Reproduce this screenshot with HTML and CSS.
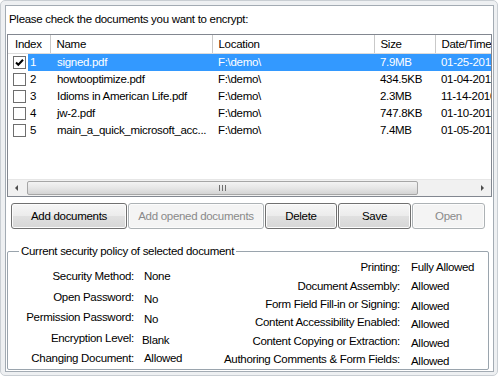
FILE: index.html
```html
<!DOCTYPE html>
<html lang="en">
<head>
  <meta charset="UTF-8" />
  <title>Encrypt documents</title>
  <link rel="stylesheet" href="styles.css">
</head>
<body>
  <div class="window">
    <div class="panel">
      <p class="prompt">Please check the documents you want to encrypt:</p>

      <div class="list">
        <div class="list-view">
          <table class="grid">
            <colgroup>
              <col class="w-index"><col class="w-name"><col class="w-loc"><col class="w-size"><col class="w-date">
            </colgroup>
            <thead>
              <tr>
                <th>Index</th><th>Name</th><th>Location</th><th>Size</th><th>Date/Time</th>
              </tr>
            </thead>
            <tbody>
              <tr class="selected">
                <td class="idx"><div class="idx-in"><span class="check checked"><svg viewBox="0 0 11 11" width="11" height="11"><path d="M2 5.5 L4.3 7.8 L9 2.8" fill="none" stroke="#000" stroke-width="2"/></svg></span><span class="num">1</span></div></td>
                <td>signed.pdf</td><td>F:\demo\</td><td>7.9MB</td><td>01-25-2011</td>
              </tr>
              <tr>
                <td class="idx"><div class="idx-in"><span class="check"></span><span class="num">2</span></div></td>
                <td>howtooptimize.pdf</td><td>F:\demo\</td><td>434.5KB</td><td>01-04-2011</td>
              </tr>
              <tr>
                <td class="idx"><div class="idx-in"><span class="check"></span><span class="num">3</span></div></td>
                <td>Idioms in American Life.pdf</td><td>F:\demo\</td><td>2.3MB</td><td>11-14-2010</td>
              </tr>
              <tr>
                <td class="idx"><div class="idx-in"><span class="check"></span><span class="num">4</span></div></td>
                <td>jw-2.pdf</td><td>F:\demo\</td><td>747.8KB</td><td>01-10-2011</td>
              </tr>
              <tr>
                <td class="idx"><div class="idx-in"><span class="check"></span><span class="num">5</span></div></td>
                <td>main_a_quick_microsoft_acc...</td><td>F:\demo\</td><td>7.4MB</td><td>01-05-2011</td>
              </tr>
            </tbody>
          </table>
        </div>
        <div class="hscroll">
          <span class="arrow arrow-left"></span>
          <div class="track">
            <div class="thumb"><span class="grip"></span></div>
          </div>
          <span class="arrow arrow-right"></span>
        </div>
      </div>

      <div class="buttons">
        <button class="btn b-add">Add documents</button>
        <button class="btn b-opened" disabled>Add opened documents</button>
        <button class="btn b-delete">Delete</button>
        <button class="btn b-save">Save</button>
        <button class="btn b-open" disabled>Open</button>
      </div>

      <fieldset class="policy">
        <legend>Current security policy of selected document</legend>
        <div class="policy-cols">
          <div class="props props-left">
            <span class="k">Security Method:</span><span class="v">None</span>
            <span class="k">Open Password:</span><span class="v low">No</span>
            <span class="k">Permission Password:</span><span class="v low">No</span>
            <span class="k">Encryption Level:</span><span class="v low shift">Blank</span>
            <span class="k">Changing Document:</span><span class="v">Allowed</span>
          </div>
          <div class="props props-right">
            <span class="k">Printing:</span><span class="v">Fully Allowed</span>
            <span class="k">Document Assembly:</span><span class="v">Allowed</span>
            <span class="k">Form Field Fill-in or Signing:</span><span class="v low">Allowed</span>
            <span class="k">Content Accessibility Enabled:</span><span class="v low">Allowed</span>
            <span class="k">Content Copying or Extraction:</span><span class="v low">Allowed</span>
            <span class="k">Authoring Comments &amp; Form Fields:</span><span class="v low">Allowed</span>
          </div>
        </div>
      </fieldset>
    </div>
  </div>
</body>
</html>
```

FILE: styles.css
```css
* {
  box-sizing: border-box;
}

body {
  margin: 0;
  background: #fff;
  font-family: 'Liberation Sans', Arial, sans-serif;
  font-size: 11.5px;
  letter-spacing: -0.3px;
  color: #000;
}

.window {
  width: 498px;
  height: 376px;
  border: 1px solid #c9ced3;
  border-radius: 5px;
  padding: 4px 3px 3px 4px;
  background: #eef0f2;
}

.panel {
  height: 100%;
  border: 1px solid #a3abb3;
  background: #fff;
  padding: 0 1px 2px 1px;
}

.prompt {
  margin: 0 0 7px 2px;
  padding-top: 5px;
  line-height: 16px;
}

/* list view */
.list {
  height: 163px;
  border: 1px solid #828790;
  display: flex;
  flex-direction: column;
}

.list-view {
  flex: 1;
  overflow: hidden;
}

.grid {
  table-layout: fixed;
  width: 507px;
  border-collapse: collapse;
}

.w-index { width: 42px; }
.w-name { width: 162px; }
.w-loc { width: 162px; }
.w-size { width: 61px; }
.w-date { width: 80px; }

.grid th {
  height: 18px;
  padding: 0 0 0 6px;
  font-weight: normal;
  text-align: left;
  white-space: nowrap;
  border-right: 1px solid #c9c9c9;
  border-bottom: 1px solid #dcdcdc;
}

.grid th:first-child {
  padding-left: 7px;
}

.grid td {
  height: 17px;
  padding: 0 0 0 6px;
  white-space: nowrap;
  overflow: hidden;
}

.grid td:nth-child(2) {
  padding-left: 7px;
}

.grid td.idx {
  padding: 0 0 0 5px;
}

.idx-in {
  display: flex;
  align-items: center;
  height: 17px;
}

.check {
  width: 13px;
  height: 13px;
  border: 1px solid #6e6e6e;
  box-shadow: inset 0 0 0 1px #fff;
  background: #fff;
  display: flex;
  align-items: center;
  justify-content: center;
}

.num {
  flex: 1;
  margin-left: 2px;
  padding-left: 2px;
  line-height: 17px;
}

.selected td {
  background: #3399ff;
  color: #fff;
}

.selected td.idx {
  background: #fff;
}

.selected .num {
  background: #3399ff;
}

/* horizontal scroll bar */
.hscroll {
  height: 17px;
  display: flex;
  align-items: center;
  background: #f1f1f1;
  border-top: 1px solid #e6e6e6;
}

.arrow {
  width: 17px;
  height: 16px;
  display: flex;
  align-items: center;
  justify-content: center;
}

.arrow::before {
  content: "";
  border-top: 3px solid transparent;
  border-bottom: 3px solid transparent;
}

.arrow-left::before {
  border-right: 3px solid #4d4d4d;
}

.arrow-right::before {
  border-left: 3px solid #4d4d4d;
}

.track {
  flex: 1;
  height: 16px;
  padding: 1px 1px 1px 2px;
  display: flex;
}

.thumb {
  width: 391px;
  border: 1px solid #a6a6a6;
  border-radius: 2px;
  background: linear-gradient(to bottom, #f3f3f3, #e6e6e6 50%, #d4d4d4);
  display: flex;
  align-items: center;
  justify-content: center;
}

.grip {
  width: 7px;
  height: 6px;
  background: repeating-linear-gradient(to right, #6f6f6f 0 1px, transparent 1px 3px);
}

/* buttons */
.buttons {
  display: flex;
  gap: 1px;
  margin-top: 6px;
  padding-left: 4px;
}

.btn {
  height: 26px;
  font: inherit;
  letter-spacing: inherit;
  color: #000;
  border: 1px solid #707070;
  border-radius: 3px;
  background: linear-gradient(to bottom, #f6f6f6, #ececec 48%, #e0e0e0 52%, #d6d6d6);
  box-shadow: inset 0 0 0 1px #fcfcfc;
  padding: 0;
}

.btn:disabled {
  color: #8a8a8a;
  border-color: #adb2b5;
  background: #f4f4f4;
}

.b-add { width: 116px; }
.b-opened { width: 136px; }
.b-delete { width: 72px; }
.b-save { width: 73px; }
.b-open { width: 73px; }

/* security policy group */
.policy {
  margin: 15px 3px 0 0;
  padding: 0;
  height: 126px;
  border: 1px solid #9aa4ad;
  border-radius: 2px;
}

.policy legend {
  margin-left: 11px;
  padding: 0 2px;
  line-height: 14px;
}

.policy-cols {
  display: flex;
}

.props {
  display: grid;
  column-gap: 10px;
  align-items: center;
}

.props-left {
  width: 200px;
  padding-top: 8px;
  grid-template-columns: 126px auto;
  grid-auto-rows: 20.5px;
}

.props-right {
  flex: 1;
  padding-top: 0;
  grid-template-columns: 192px auto;
  column-gap: 11px;
  grid-auto-rows: 18.4px;
}

.k {
  text-align: right;
  white-space: nowrap;
}

.v {
  white-space: nowrap;
}

.low {
  position: relative;
  top: 2px;
}

.shift {
  left: -2px;
}
```
